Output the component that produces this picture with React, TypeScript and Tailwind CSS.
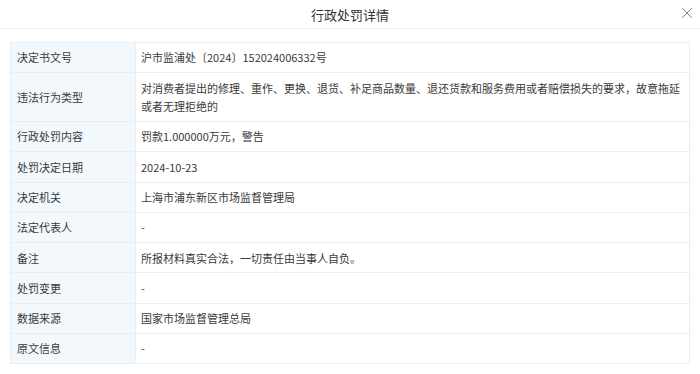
import { X } from 'lucide-react'

const rows: { label: string; value: string }[] = [
  { label: '决定书文号', value: '沪市监浦处〔2024〕152024006332号' },
  {
    label: '违法行为类型',
    value:
      '对消费者提出的修理、重作、更换、退货、补足商品数量、退还货款和服务费用或者赔偿损失的要求，故意拖延或者无理拒绝的',
  },
  { label: '行政处罚内容', value: '罚款1.000000万元，警告' },
  { label: '处罚决定日期', value: '2024-10-23' },
  { label: '决定机关', value: '上海市浦东新区市场监督管理局' },
  { label: '法定代表人', value: '-' },
  { label: '备注', value: '所报材料真实合法，一切责任由当事人自负。' },
  { label: '处罚变更', value: '-' },
  { label: '数据来源', value: '国家市场监督管理总局' },
  { label: '原文信息', value: '-' },
]

export default function App() {
  return (
    <div
      className="w-[700px] h-[374px] bg-white text-[#3a3a3a] overflow-hidden"
      style={{ fontFamily: '"Microsoft YaHei", "Noto Sans CJK SC", "Noto Sans", sans-serif' }}
    >
      {/* Header */}
      <div className="relative flex h-[29px] items-center justify-center border-b border-[#eeeeee]">
        <h1 className="text-[13px] leading-none text-[#333]">行政处罚详情</h1>
        <button className="absolute right-[4px] top-[4px] text-[#555]">
          <X className="h-[18px] w-[18px]" strokeWidth={1} />
        </button>
      </div>

      {/* Detail table */}
      <div className="mx-[10px] mt-[13px] border border-[#e6eef7]">
        {rows.map((row, i) => (
          <div
            key={row.label}
            className={`flex text-[11px] leading-[18.5px] ${i < rows.length - 1 ? 'border-b border-[#e6eef7]' : ''}`}
          >
            <div className="flex w-[125px] shrink-0 items-center border-r border-[#e6eef7] bg-[#f3f8fd] px-[6px] py-[5.4px]">
              {row.label}
            </div>
            <div className="flex-1 px-[5px] py-[5.4px] pr-[8px]">{row.value}</div>
          </div>
        ))}
      </div>
    </div>
  )
}
